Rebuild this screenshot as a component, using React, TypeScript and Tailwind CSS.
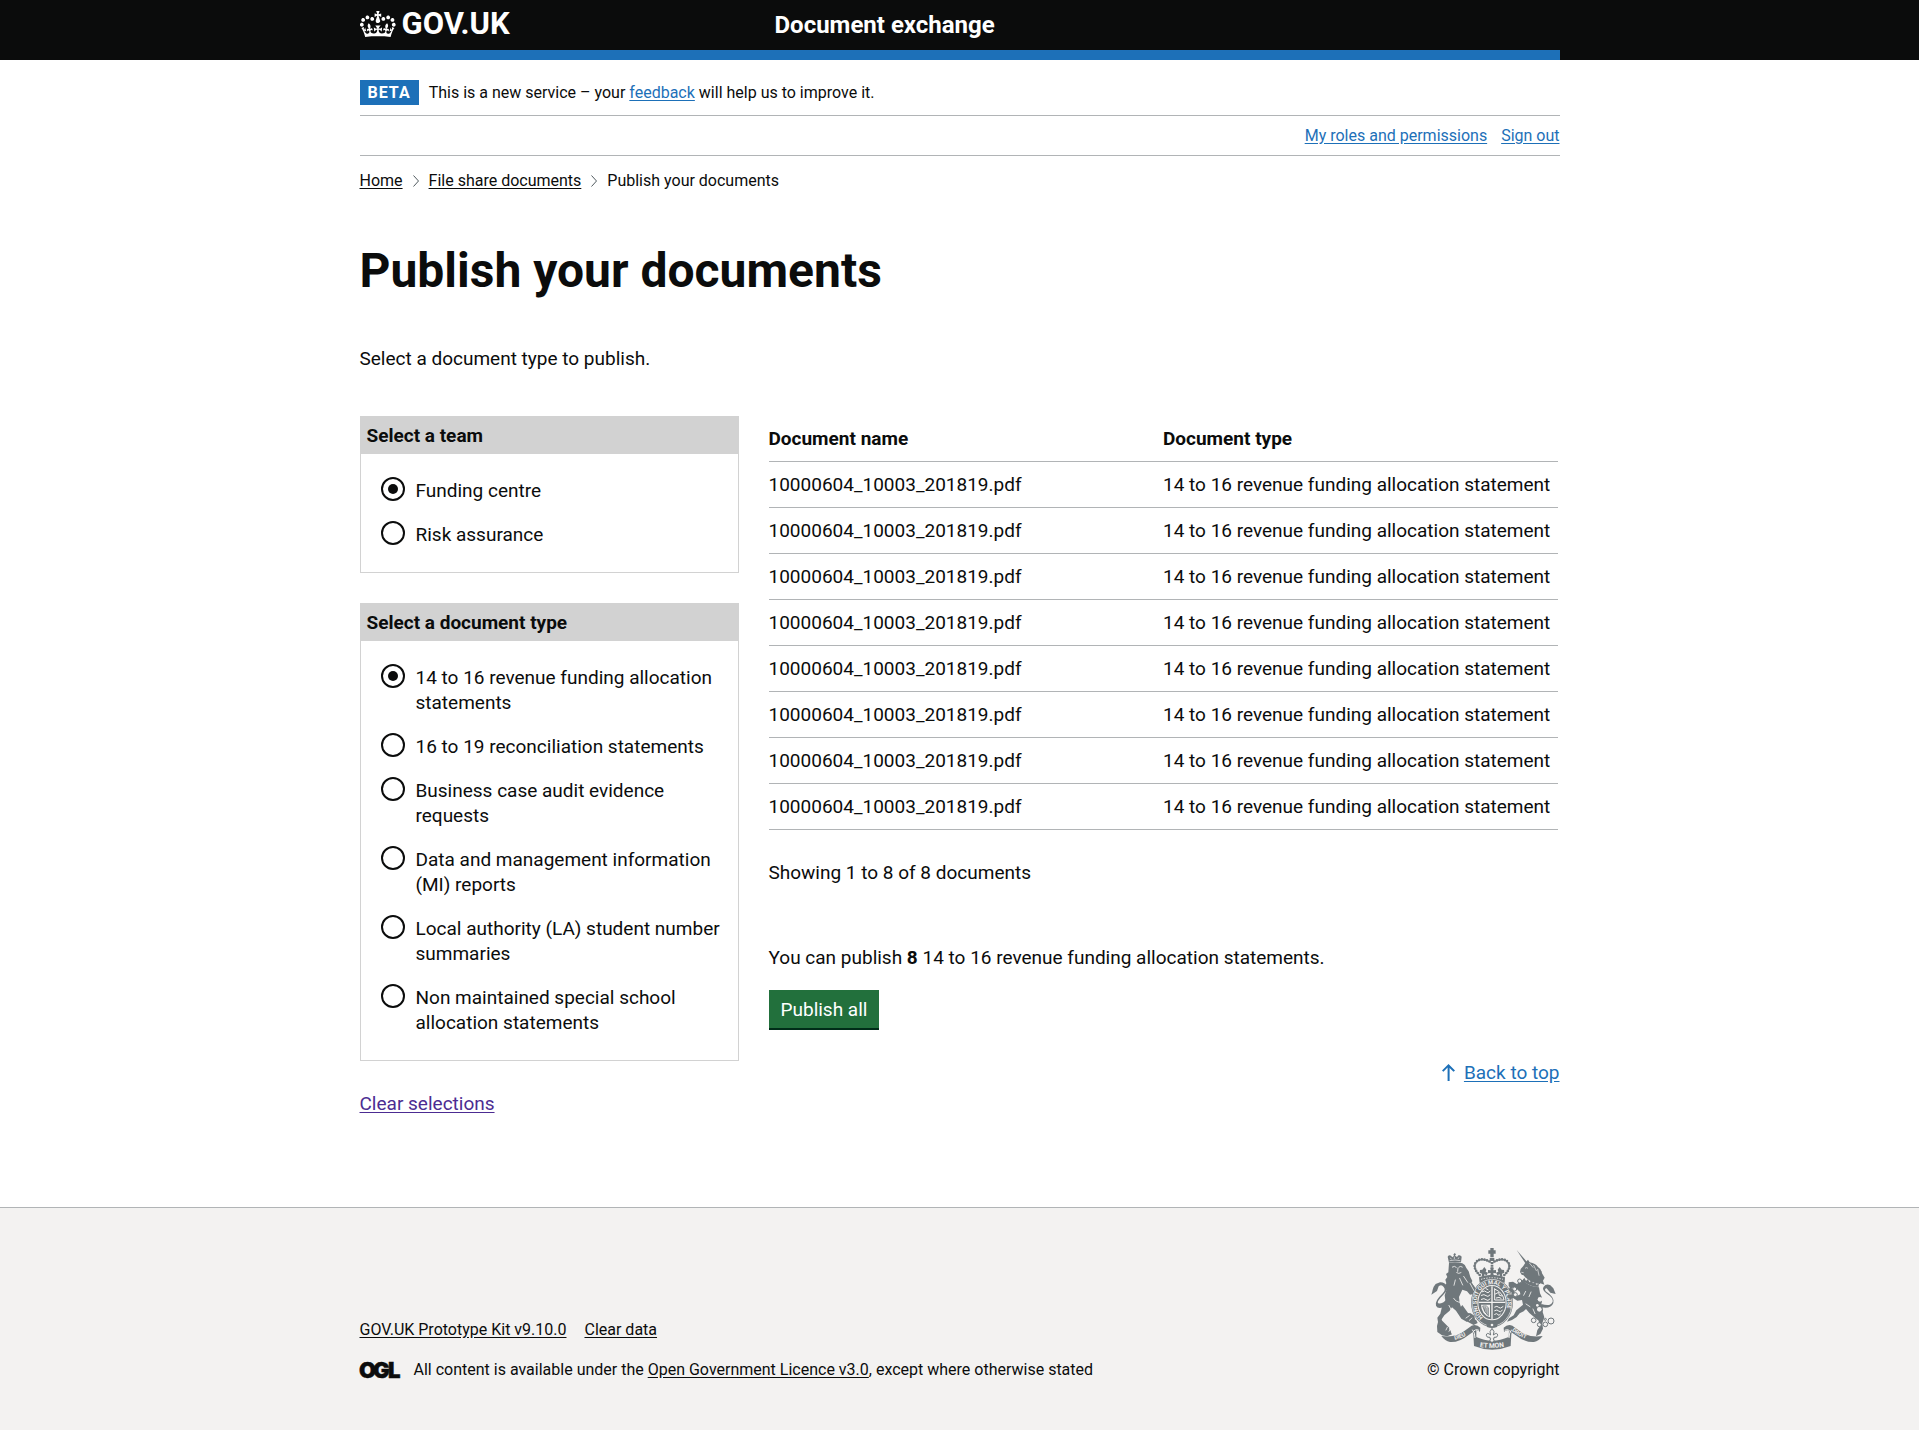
import type { ReactNode } from "react";

const teams = ["Funding centre", "Risk assurance"];

const documentTypes = [
  "14 to 16 revenue funding allocation statements",
  "16 to 19 reconciliation statements",
  "Business case audit evidence requests",
  "Data and management information (MI) reports",
  "Local authority (LA) student number summaries",
  "Non maintained special school allocation statements",
];

const documents = Array.from({ length: 8 }, () => ({
  name: "10000604_10003_201819.pdf",
  type: "14 to 16 revenue funding allocation statement",
}));

function Crown() {
  return (
    <svg viewBox="0 4 36 27" className="h-[27px] w-9 fill-white" aria-hidden="true">
      <path d="M6.7 12.2c1 .4 2.1-.1 2.5-1s-.1-2.1-1-2.5c-1-.4-2.1.1-2.5 1-.4 1 0 2.1 1 2.5m-4.3 2.5c1 .4 2.1-.1 2.5-1s-.1-2.1-1-2.5c-1-.4-2.1.1-2.5 1-.5 1 0 2.1 1 2.5m-1.3 4.8c1 .4 2.1-.1 2.5-1 .4-1-.1-2.1-1-2.5-1-.4-2.1.1-2.5 1-.4 1 0 2.1 1 2.5m10.4-5.8c1 .4 2.1-.1 2.5-1s-.1-2.1-1-2.5c-1-.4-2.1.1-2.5 1s0 2.1 1 2.5m17.4-1.5c-1 .4-2.1-.1-2.5-1s.1-2.1 1-2.5c1-.4 2.1.1 2.5 1 .5 1 0 2.1-1 2.5m4.3 2.5c-1 .4-2.1-.1-2.5-1s.1-2.1 1-2.5c1-.4 2.1.1 2.5 1 .5 1 0 2.1-1 2.5m1.3 4.8c-1 .4-2.1-.1-2.5-1-.4-1 .1-2.1 1-2.5 1-.4 2.1.1 2.5 1 .4 1 0 2.1-1 2.5m-10.4-5.8c-1 .4-2.1-.1-2.5-1s.1-2.1 1-2.5c1-.4 2.1.1 2.5 1s0 2.1-1 2.5m-5.3-4.9 2.4 1.3V6.5l-2.4.8c-.1-.1-.1-.2-.2-.2s1-3 1-3h-3.4l1 3c-.1.1-.2.1-.2.2-.1.1-2.4-.7-2.4-.7v3.5L17 8.8c.1.1.1.2.2.3l-1.4 4.2c-.1.2-.1.4-.1.6 0 1.1.8 2 1.9 2.2h.7c1-.2 1.9-1.1 1.9-2.1 0-.2 0-.4-.1-.6l-1.4-4.2c-.1-.2 0-.3.1-.4m-1 20.3c4.6 0 8.9.3 12.8.9 1.1-4.6 2.4-7.2 3.8-9.1l-2.6-.9c.3 1.3.3 1.9 0 2.8-.4-.4-.8-1.2-1.1-2.4l-1.2 4.2c.8-.5 1.4-.9 2-.9-1.2 2.6-2.7 3.2-3.6 3-1.2-.2-1.7-1.3-1.5-2.2.3-1.3 1.6-1.6 2.2-.1 1.2-2.4-.8-3.1-2.1-2.4 1.9-1.9 2.2-3.6.6-5.7-2.2 1.7-2.2 3.3-1.2 5.6-1.3-1.5-3.3-.7-2.5 1.7.9-1.4 2.1-.5 2 .8-.2 1.2-1.7 2.1-3.7 2-2.8-.2-3-2.2-3-3.7.7-.1 1.9.5 3 2l.4-4.4c-1.1 1.2-2.3 1.4-3.5 1.4.4-1.2 2.1-3.1 2.1-3.1h-5.5s1.8 2 2.1 3.1c-1.2 0-2.3-.2-3.5-1.4l.4 4.4c1.1-1.5 2.3-2.1 3-2-.1 1.6-.2 3.5-3 3.7-1.9.2-3.5-.8-3.7-2-.2-1.3 1-2.2 1.9-.8.8-2.4-1.2-3.1-2.5-1.7 1-2.3 1-3.9-1.2-5.6-1.6 2-1.3 3.8.6 5.7-1.3-.7-3.2 0-2.1 2.4.6-1.5 1.9-1.2 2.2.1.2.9-.4 1.9-1.5 2.2-.9.2-2.4-.4-3.6-3 .6 0 1.2.3 2 .9l-1.2-4.2c-.3 1.1-.7 1.9-1.1 2.4-.3-.8-.2-1.5 0-2.8l-2.6.9c1.3 1.9 2.7 4.5 3.8 9.1 4.2-.5 8.4-.9 13-.9" />
    </svg>
  );
}

function OglLogo() {
  return (
    <svg
      viewBox="-2 -8 46 32"
      className="-mx-[2px] -my-[6px] h-8 w-[46px] shrink-0 fill-[#0b0c0c] stroke-[#0b0c0c] font-['Inter',sans-serif]"
      role="img"
      aria-label="Open Government Licence"
    >
      <g fontSize="22" fontWeight="900" strokeWidth="0.5">
        <text x="-1" y="16">O</text>
        <text x="13" y="16">G</text>
        <text x="28" y="16">L</text>
      </g>
    </svg>
  );
}

function RoyalArms() {
  return (
    <svg
      viewBox="66 54 375 306"
      className="h-[102px] w-[125px] fill-[#6f777b]"
      role="img"
      aria-label="Royal coat of arms"
    >
      <defs>
        <path id="garter" d="M222 262A46 55 0 1 1 276 262" />
        <path id="motto-left" d="M137 329q30-5 54-28" />
        <path id="motto-centre" d="M206 350q43 8 86-1" />
        <path id="motto-right" d="M308 302q24 21 54 27" />
      </defs>

      {/* Lion */}
      <path d="M120 98 116 80q4-6 10-3l4 5 5-5-2-3 4-5 4 4-3 4 6 4 4-5q7-2 10 4l-2 17q-18-3-36 1z" />
      <path d="M122 92q16-4 32 0M124 83l3 5M136 80v7M150 82l-3 5" className="fill-none stroke-[#f3f2f1]" strokeWidth="2" />
      <path d="M120 99q20-5 40 1 9 3 12 14l7 10 5 17 6 12-3 6 9 10 3 14-6 9-10 2-9-10-14-5-10 22 2 18 8 24 14 6 11 1 11 7 2 10-8 8-11-2-5 3-17-10-16-24-12-10-7 10-16 14-8 12 4 22 10 8 12 3 4 12-13 6-16-3-14-10-1-18 3-12-2-13 9-12 5-21 10-19-2-15 5-15-5-11 5-10-3-11 6-8-4-9 7-5z" />
      <path d="M117 226q-30 16-36 1-5-14 19-36 12-11 4-20-6-9-15-2l-5 14-17 11q3-9 4-15l3-9 6-8 13-5q14-1 20 11 5 13-10 26-22 22-15 26 8 4 29-13z" />
      <path d="M89 262l-1 22 12 20 28 10-9-22z" />
      <path d="M160 225l24 34 18 12 4 8-12 6-17-9-28-37z" />
      <path d="M181 152q10 5 13 17l14 13-4 12-21-17z" />
      <g fill="none" className="stroke-[#f3f2f1]" strokeWidth="2.5" strokeLinecap="round">
        <path d="M130 111q7-5 12 1M150 111q5-4 10 0M143 128q6 5 13 0M147 114l-1 10M164 139l12 18M152 145l9 20M139 150l-4 16M134 205q7 12 21 12M120 226q8 10 7 24M183 160l12 22M171 264l10-7M181 271l8-7M111 300l4-8M120 304l4-7" />
      </g>

      {/* Imperial crown */}
      <path d="M244 54h10v7h6v10h-6v11h-10V71h-6V61h6z" />
      <path d="M242 84h14v9h-14z" />
      <g fill="none" className="stroke-[#6f777b]">
        <path d="M212 135q-22-21-12-37 14-19 46-1M286 135q22-21 12-37-14-19-46-1" strokeWidth="3" />
        <path d="M212 135q-22-21-12-37 14-19 46-1M286 135q22-21 12-37-14-19-46-1" strokeWidth="8" strokeDasharray="0 8" strokeLinecap="round" />
        <path d="M249 96v20" strokeWidth="8" strokeDasharray="6 2" />
      </g>
      <path d="M244 113h10l-1 8 8-1v10l-8-1 2 14h-12l2-14-8 1v-10l8 1zM220 119l6-8 6 8-2 6 7 3-4 8-7-3-1 7h-7l1-9-7-3 1-8zM278 119l-6-8-6 8 2 6-7 3 4 8 7-3 1 7h7l-1-9 7-3-1-8z" />
      <path d="M210 142q38-15 78 0l-1 16q-37-10-75 0z" />
      <path d="M216 148q33-9 66 0" fill="none" className="stroke-[#f3f2f1]" strokeWidth="3" strokeDasharray="4 4" />

      {/* Garter and shield */}
      <ellipse cx="249" cy="218" rx="63" ry="73" />
      <ellipse cx="249" cy="218" rx="60" ry="70" fill="none" className="stroke-[#f3f2f1]" strokeWidth="2" />
      <ellipse cx="249" cy="218" rx="44" ry="53" className="fill-[#f3f2f1]" />
      <ellipse cx="249" cy="218" rx="41" ry="50" />
      <text className="fill-[#f3f2f1] font-['Roboto',sans-serif]" fontSize="17" fontWeight="700">
        <textPath href="#garter">HONI SOIT QUI MAL Y PENSE</textPath>
      </text>
      <path d="M249 169v98M209 217h80" fill="none" className="stroke-[#f3f2f1]" strokeWidth="4" />
      <path d="M216 224h27v38q-26-9-27-38z" className="fill-[#f3f2f1]" />
      <g fill="none" className="stroke-[#f3f2f1]" strokeWidth="3" strokeLinecap="round">
        <path d="M220 185q8-5 12 1t11-2M217 196q9-5 14 1t12-2M217 208q9-5 14 1t12-2M231 176l6 3" />
        <path d="M257 177v33h28q-3-22-28-33zM259 192l10-5 2 9 8 2M262 204l8-2 6 3" />
        <path d="M257 231q8-5 12 1t13-2M257 242q8-5 12 1t11-2M257 253q7-5 10 1t7-2" />
      </g>
      <path d="M221 228q4 18 17 29M221 228q13-3 17 5v24M225 230l2 14M230 230l1 19M234 233v20" fill="none" className="stroke-[#6f777b]" strokeWidth="2.5" />
      <path d="M231 276q18 10 36 0l-3 15q-15 6-30 0z" />
      <circle cx="249" cy="285" r="4" className="fill-[#f3f2f1]" />

      {/* Unicorn */}
      <path d="M323 60l31 36-5 4z" />
      <path d="M350 97l7-8 5 8q18 3 25 14 11 7 12 19l8 13-5 9 4 12-12-4-6 12q-28-4-46-23l5-9q-2-6-9-6l-5-8 2-9 8-9z" />
      <path d="M340 150q22 20 50 22l3 18q10 16 4 32 7 14 4 24l5 16-6 18 2 16-8 16-13 7 4-19 7-10-3-18-13-10-15-13-10-12-7 7-12 6-9 11-14 9-15 5 6-10 14-9 8-15 20-17-3-14-14 2-13-8-8 4-9-6 3-9 16 2 11 2 9-4-3-18-12-9z" />
      <path d="M299 157l13-2 15 9 10 12-5 9-14-13-13 3-6-7z" />
      <path d="M304 168l-5 11 9 9 3 12 13 4 3-6-10-5-1-12-8-6 4-5z" />
      <path d="M397 222q28 9 34-7 3-11-17-24-17-12-10-21 8-11 20-4l9 9 7 17-16-4-11-13q-8 1-3 9 28 18 23 35-7 19-37 13z" />
      <g fill="none" className="stroke-[#f3f2f1]" strokeWidth="2.5" strokeLinecap="round">
        <path d="M349 114q4-3 7 0M338 127l5 1M362 100l10 12M374 106l8 16M386 118l4 18" strokeWidth="2" />
        <path d="M344 143q22 20 47 23" strokeWidth="8" />
        <path d="M351 222l12 8M372 237l6 14M328 256l4 5M350 184l-6 12M366 186l-6 14" />
      </g>
      <path d="M340 152l6-9 5 10 6-6 4 10 7-6 4 9 8-4 1 8 9-2-2 8q-29-2-48-18z" />
      <g className="fill-[#f3f2f1]">
        <circle cx="393" cy="208" r="7" />
        <circle cx="385" cy="226" r="4" />
        <circle cx="391" cy="238" r="7" />
      </g>
      <g className="fill-[#f3f2f1] stroke-[#6f777b]" strokeWidth="3">
        <circle cx="332" cy="153" r="6" />
        <circle cx="317" cy="177" r="6" />
        <circle cx="319" cy="194" r="6" />
        <circle cx="374" cy="271" r="7" />
        <circle cx="391" cy="284" r="6" />
        <circle cx="409" cy="283" r="7" />
        <circle cx="426" cy="273" r="9" />
        <circle cx="409" cy="268" r="3" />
      </g>

      {/* Motto scroll */}
      <path d="M97 318q43 6 69-15l22-16q14-6 26 6l-1 13q-8-9-17-3l-16 11q-30 24-57 22-15-3-26-18z" />
      <path d="M401 318q-43 6-69-15l-22-16q-14-6-26 6l1 13q8-9 17-3l16 11q30 24 57 22 15-3 26-18z" />
      <path d="M188 287l-5 10 10 14 2 37q54 22 110 0l2-37 9-14-6-10-10 15-1 19q-50 22-97 0v-19z" />
      <path d="M190 299q8 8 8 25M308 299q-8 8-8 25M210 301q-12-6-19 7M287 301q12-6 19 7" fill="none" className="stroke-[#f3f2f1]" strokeWidth="3" />
      <g className="fill-[#f3f2f1] font-['Roboto',sans-serif]" fontWeight="700">
        <text fontSize="17">
          <textPath href="#motto-left">DIEU</textPath>
        </text>
        <text fontSize="20">
          <textPath href="#motto-centre" startOffset="6">ET MON</textPath>
        </text>
        <text fontSize="17">
          <textPath href="#motto-right">DROIT</textPath>
        </text>
      </g>

      {/* Fleur-de-lis */}
      <path d="M249 295q10 10 4 20 12-10 13 1-1 8-11 6v4h-2l3 8-7 3-7-3 3-8h-2v-4q-10 2-11-6 1-11 13-1-6-10 4-20z" className="fill-[#f3f2f1] stroke-[#6f777b]" strokeWidth="3" />
    </svg>
  );
}

function RadioPanel({ title, name, options }: { title: string; name: string; options: string[] }) {
  return (
    <section className="border border-[#d2d2d2]">
      <h2 className="bg-[#d2d2d2] px-[6px] py-[6px] font-bold">{title}</h2>
      <div className="flex flex-col gap-[19px] pt-6 pr-3 pb-[25px] pl-5">
        {options.map((option, index) => (
          <label key={option} className="flex cursor-pointer items-start gap-[11px]">
            <input
              type="radio"
              name={name}
              defaultChecked={index === 0}
              className="-mt-px grid size-6 shrink-0 cursor-pointer appearance-none place-items-center rounded-full border-2 border-[#0b0c0c] bg-white before:size-[10px] before:rounded-full before:content-[''] checked:before:bg-[#0b0c0c]"
            />
            <span>{option}</span>
          </label>
        ))}
      </div>
    </section>
  );
}

function Link({ children, className = "" }: { children: ReactNode; className?: string }) {
  return (
    <a href="#" className={`underline underline-offset-2 ${className}`}>
      {children}
    </a>
  );
}

function Chevron() {
  return (
    <svg viewBox="0 0 6 12" className="h-3 w-[6px] fill-none stroke-[#505a5f]" aria-hidden="true">
      <path d="M.5.5 5.5 6l-5 5.5" />
    </svg>
  );
}

const container = "mx-auto w-full max-w-[1200px]";

export default function App() {
  return (
    <div className="flex min-h-screen flex-col bg-white font-['Roboto',sans-serif] text-[19px] leading-[25px] text-[#0b0c0c]">
      <header className="bg-[#0b0c0c] text-white">
        <div className={`${container} flex h-[60px] items-center border-b-10 border-[#1d70b8]`}>
          <a href="#" className="flex w-[415px] items-center gap-[6px] pb-[2px] text-[31px] leading-[30px] font-bold">
            <Crown />
            GOV.UK
          </a>
          <a href="#" className="text-2xl leading-[30px] font-bold">
            Document exchange
          </a>
        </div>
      </header>

      <div className={`${container} text-base leading-5`}>
        <div className="flex items-center gap-[10px] border-b border-[#b1b4b6] pt-5 pb-[10px]">
          <strong className="bg-[#1d70b8] px-2 py-[2px] leading-[21px] tracking-[1px] text-white">BETA</strong>
          <p>
            This is a new service – your <Link className="text-[#1d70b8]">feedback</Link> will help us to improve it.
          </p>
        </div>
        <nav aria-label="Account" className="flex justify-end gap-[14px] border-b border-[#b1b4b6] py-[10px] leading-[19px] text-[#1d70b8]">
          <Link>My roles and permissions</Link>
          <Link>Sign out</Link>
        </nav>
        <nav aria-label="Breadcrumb" className="pt-[15px]">
          <ol className="flex items-center gap-[10px]">
            <li><Link>Home</Link></li>
            <li aria-hidden="true"><Chevron /></li>
            <li><Link>File share documents</Link></li>
            <li aria-hidden="true"><Chevron /></li>
            <li>Publish your documents</li>
          </ol>
        </nav>
      </div>

      <main className={`${container} flex-1 pt-[55px] pb-[90px]`}>
        <h1 className="text-5xl leading-[50px] font-bold">Publish your documents</h1>
        <p className="mt-[50px]">Select a document type to publish.</p>

        <div className="mt-[45px] flex items-start gap-[30px]">
          <div className="w-[379px] shrink-0">
            <form className="flex flex-col gap-[30px]">
              <RadioPanel title="Select a team" name="team" options={teams} />
              <RadioPanel title="Select a document type" name="document-type" options={documentTypes} />
            </form>
            <p className="mt-[30px]">
              <Link className="text-[#4c2c92]">Clear selections</Link>
            </p>
          </div>

          <div className="min-w-0 flex-1">
            <div className="pr-[2px]">
              <table className="w-full table-fixed border-collapse text-left">
                <thead>
                  <tr className="border-b border-[#b1b4b6]">
                    <th scope="col" className="py-[10px] font-bold">Document name</th>
                    <th scope="col" className="py-[10px] font-bold">Document type</th>
                  </tr>
                </thead>
                <tbody>
                  {documents.map((document, index) => (
                    <tr key={index} className="border-b border-[#b1b4b6]">
                      <td className="py-[10px]">{document.name}</td>
                      <td className="py-[10px] whitespace-nowrap">{document.type}</td>
                    </tr>
                  ))}
                </tbody>
              </table>
            </div>
            <p className="mt-[30px]">Showing 1 to 8 of 8 documents</p>
            <p className="mt-[60px]">
              You can publish <b>8</b> 14 to 16 revenue funding allocation statements.
            </p>
            <button
              type="button"
              className="mt-5 h-[38px] cursor-pointer bg-[#22703c] px-3 text-white shadow-[0_2px_0_#002d18]"
            >
              Publish all
            </button>
            <div className="mt-8 flex justify-end">
              <a href="#" className="flex items-center gap-[9px] text-[#1d70b8]">
                <svg viewBox="0 0 13 17" className="h-[17px] w-[13px] fill-current" aria-hidden="true">
                  <path d="M5.6 17h2V3.9l3.9 3.9L13 6.4 6.5 0 0 6.4l1.4 1.4 4.2-4.2z" />
                </svg>
                <span className="underline underline-offset-2">Back to top</span>
              </a>
            </div>
          </div>
        </div>
      </main>

      <footer className="border-t border-[#b1b4b6] bg-[#f3f2f1] text-base leading-5">
        <div className={`${container} flex items-end justify-between pt-10 pb-[50px]`}>
          <div className="flex flex-col gap-5">
            <ul className="flex gap-[18px]">
              <li><Link>GOV.UK Prototype Kit v9.10.0</Link></li>
              <li><Link>Clear data</Link></li>
            </ul>
            <div className="flex items-center gap-3">
              <OglLogo />
              <p>
                All content is available under the <Link>Open Government Licence v3.0</Link>, except where otherwise stated
              </p>
            </div>
          </div>
          <a href="#" className="flex flex-col items-center gap-[10px]">
            <RoyalArms />
            <span>© Crown copyright</span>
          </a>
        </div>
      </footer>
    </div>
  );
}
